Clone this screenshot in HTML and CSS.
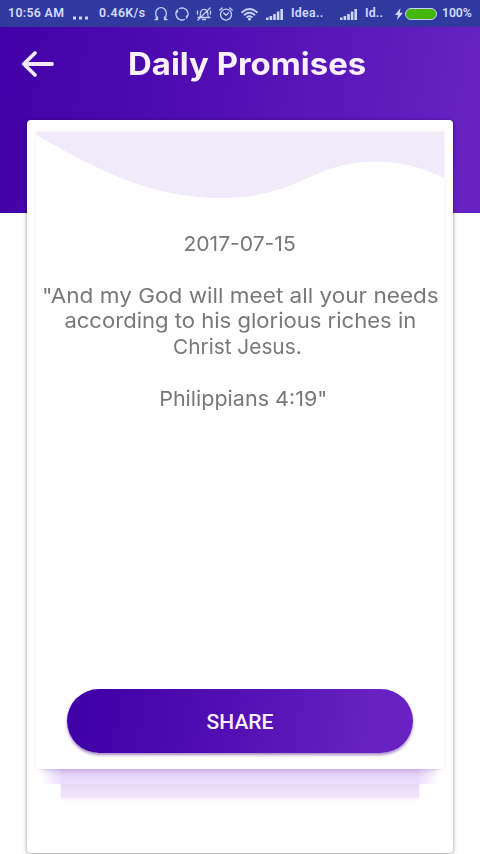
FILE: index.html
```html
<!DOCTYPE html>
<html lang="en">
<head>
<meta charset="utf-8">
<meta name="viewport" content="width=device-width, initial-scale=1">
<title>Daily Promises</title>
<link rel="stylesheet" href="styles.css">
</head>
<body>
<div class="screen">
  <div class="status">
    <span class="time">10:56 AM</span>
    <svg class="dots" viewBox="0 0 15 14"><path class="solid" d="M0 9.500h3v3H0zM6 9.500h3v3H6zM12 9.500h3v3h-3z"/></svg>
    <span class="speed">0.46K/s</span>
    <svg class="phones" viewBox="0 0 14 14"><path class="line" d="M1 12.500h2.500V10M3.500 12.500C1.700 10.500 1.700 8.500 1.700 6a5.300 5.300 0 0 1 10.600 0c0 2.500 0 4.500-1.800 6.500M13 12.500h-2.500V10"/></svg>
    <svg class="sync" viewBox="0 0 14 14"><path class="line" d="M8.500 1.200A6 6 0 0 1 11.500 11M9.500 12.500A6 6 0 0 1 5.500 12.800M5.500 12.800A6 6 0 0 1 2.500 3M4.500 1.500A6 6 0 0 1 8.500 1.200M11.500 11v-2M2.500 3v2"/></svg>
    <svg class="bell" viewBox="0 0 16 14"><path class="line" d="M2 10.500h12M3.500 10.500c1-1 1-2 1-4.500a3.600 3.600 0 0 1 7.200 0c0 2.500 0 3.500 1 4.500M6.500 12.500h3M2 13L14 1M1.500 4v3M14.500 4v3"/></svg>
    <svg class="alarm" viewBox="0 0 14 14"><circle class="line" cx="7" cy="7.600" r="5.500"/><path class="line" d="M.8 3L3.300 .9M13.200 3L10.700 .9M4.700 6L7 8.200 9.500 6"/></svg>
    <svg class="wifi" viewBox="0 0 17 14"><path class="line thick" d="M1 5.200Q8.500-1.200 16 5.200M3.500 7.700q5-4 10 0M6 10.100q2.500-2 5 0"/><circle class="solid" cx="8.500" cy="12" r="1.500"/></svg>
    <svg class="signal" viewBox="0 0 17 14"><path class="solid" d="M0 10.500h2.600V13H0zM3.600 9h2.600v4H3.600zM7.200 7h2.600v6H7.200zM10.800 4.500h2.600V13h-2.600zM14.400 2H17v11h-2.600z"/></svg>
    <span class="sim-one">Idea..</span>
    <svg class="signal" viewBox="0 0 17 14"><path class="solid" d="M0 10.500h2.600V13H0zM3.600 9h2.600v4H3.600zM7.200 7h2.600v6H7.200zM10.800 4.500h2.600V13h-2.600zM14.400 2H17v11h-2.600z"/></svg>
    <span class="sim-two">Id..</span>
    <svg class="bolt" viewBox="0 0 8 14"><path class="solid" d="M5.500 1L0 8h3L2 13l6-7.200H4.800z"/></svg>
    <span class="battery"></span>
    <span class="percent">100%</span>
  </div>
  <header class="header">
    <svg class="back" viewBox="0 0 34 28"><path d="M14 3L2.800 14 14 25M3 14h28"/></svg>
    <h1 class="title">Daily Promises</h1>
  </header>
  <main class="panel">
    <section class="card">
      <svg class="wave" viewBox="0 0 408 68" preserveAspectRatio="none"><path d="M0 0H408V46C365 25 323 25 283 41C245 59 222 66 184 66C112 66 55 34 0 3Z"/></svg>
      <p class="line-text date">2017-07-15</p>
      <blockquote class="verse">
        <p class="line-text first">"And my God will meet all your needs</p>
        <p class="line-text second">according to his glorious riches in</p>
        <p class="line-text third">Christ Jesus.</p>
      </blockquote>
      <p class="line-text source">Philippians 4:19"</p>
      <button class="share" type="button">SHARE</button>
    </section>
    <div class="layer middle"></div>
    <div class="layer bottom"></div>
  </main>
</div>
</body>
</html>
```
FILE: styles.css
```css
* { box-sizing: border-box; }
body { margin: 0; background: #fff; }
.screen {
  width: 480px;
  height: 854px;
  overflow: hidden;
  background: linear-gradient(100deg, #4100a7 0%, #530fb3 48%, #6822c3 95%) 0 0 / 480px 213px no-repeat, #fff;
}
.status {
  display: flex;
  align-items: center;
  height: 27px;
  padding-left: 8px;
  background: #303a9e;
  color: #d4dcff;
  font: 600 12.3px/27px Roboto, sans-serif;
  white-space: nowrap;
}
.status > * { flex: none; }
.status svg { height: 14px; }
.solid { fill: #cdd6ff; }
.line { fill: none; stroke: #c5d0ff; stroke-width: 1.3; stroke-linecap: round; stroke-linejoin: round; }
.thick { stroke-width: 1.8; }
.time { width: 65px; letter-spacing: .35px; }
.dots { width: 15px; margin-right: 11px; }
.speed { width: 55px; letter-spacing: .45px; }
.phones, .sync { width: 14px; margin-right: 7px; }
.bell { width: 16px; margin-right: 7px; }
.alarm { width: 14px; margin-right: 8px; }
.wifi { width: 17px; margin-right: 8px; }
.signal { width: 17px; margin-right: 8px; }
.sim-one { width: 49px; letter-spacing: .3px; }
.sim-two { width: 30px; letter-spacing: .2px; }
.bolt { width: 8px; margin-right: 2px; }
.battery {
  width: 32px;
  height: 12px;
  margin-right: 5px;
  border: 1px solid #c4ceff;
  border-radius: 6px;
  background: #43b80b;
}
.percent { letter-spacing: -.1px; }
.header {
  display: flex;
  align-items: center;
  height: 93px;
  padding: 0 0 19px 21px;
}
.back { width: 34px; height: 28px; flex: none; }
.back path { fill: none; stroke: #f6eaff; stroke-width: 3.8; stroke-linecap: round; stroke-linejoin: round; }
.title {
  margin: 0 0 0 73px;
  color: #f9f0ff;
  font: 700 31px/40px Inter, sans-serif;
  transform: scaleX(1.062);
  transform-origin: left;
  white-space: nowrap;
}
.panel {
  width: 426px;
  height: 733px;
  margin: 0 auto 0 27px;
  padding: 12px 9px 0;
  border-radius: 4px;
  background: #fff;
  box-shadow: 0 1px 4px rgba(0, 0, 0, .42);
}
.card {
  position: relative;
  z-index: 2;
  display: flex;
  flex-direction: column;
  align-items: center;
  width: 408px;
  height: 637px;
  background: #fff;
  box-shadow: 0 0 2px rgba(120, 70, 220, .18), 0 6px 6px -5px rgba(100, 20, 170, .2);
}
.wave { display: block; width: 408px; height: 68px; flex: none; }
.wave path { fill: #f0eafa; }
.line-text {
  margin: 0;
  color: #787878;
  font: 400 20.5px/25.8px Inter, sans-serif;
  text-align: center;
  white-space: nowrap;
}
.date { margin-top: 31px; transform: scaleX(1.028); }
.verse { margin: 25.8px 0; }
.first { transform: scaleX(1.1); }
.second { transform: scaleX(1.076); }
.third { padding-right: 6px; transform: scaleX(1.016); }
.source { padding-left: 6px; transform: scaleX(1.05); }
.share {
  width: 346px;
  height: 64px;
  margin: auto 0 16px;
  padding: 2px 0 0;
  border: 0;
  border-radius: 32px;
  background: linear-gradient(100deg, #4000a7 5%, #530fb3 48%, #6822c3 88%);
  box-shadow: 0 2px 3px rgba(60, 0, 120, .45);
  color: #fff0ff;
  font: 500 21px/1 Roboto, sans-serif;
}
.layer { margin: 0 auto; }
.middle {
  width: 408px;
  height: 15px;
  background: linear-gradient(#dfccf2, #e8d8fc 55%, #ecdffc);
  -webkit-mask-image: linear-gradient(90deg, transparent 5px, #000 26px, #000 382px, transparent 403px);
  mask-image: linear-gradient(90deg, transparent 5px, #000 26px, #000 382px, transparent 403px);
}
.bottom {
  width: 358px;
  height: 14px;
  background: linear-gradient(#e6d8f5, #f2e9fc);
  box-shadow: 0 1px 4px rgba(173, 105, 240, .12);
}
```
